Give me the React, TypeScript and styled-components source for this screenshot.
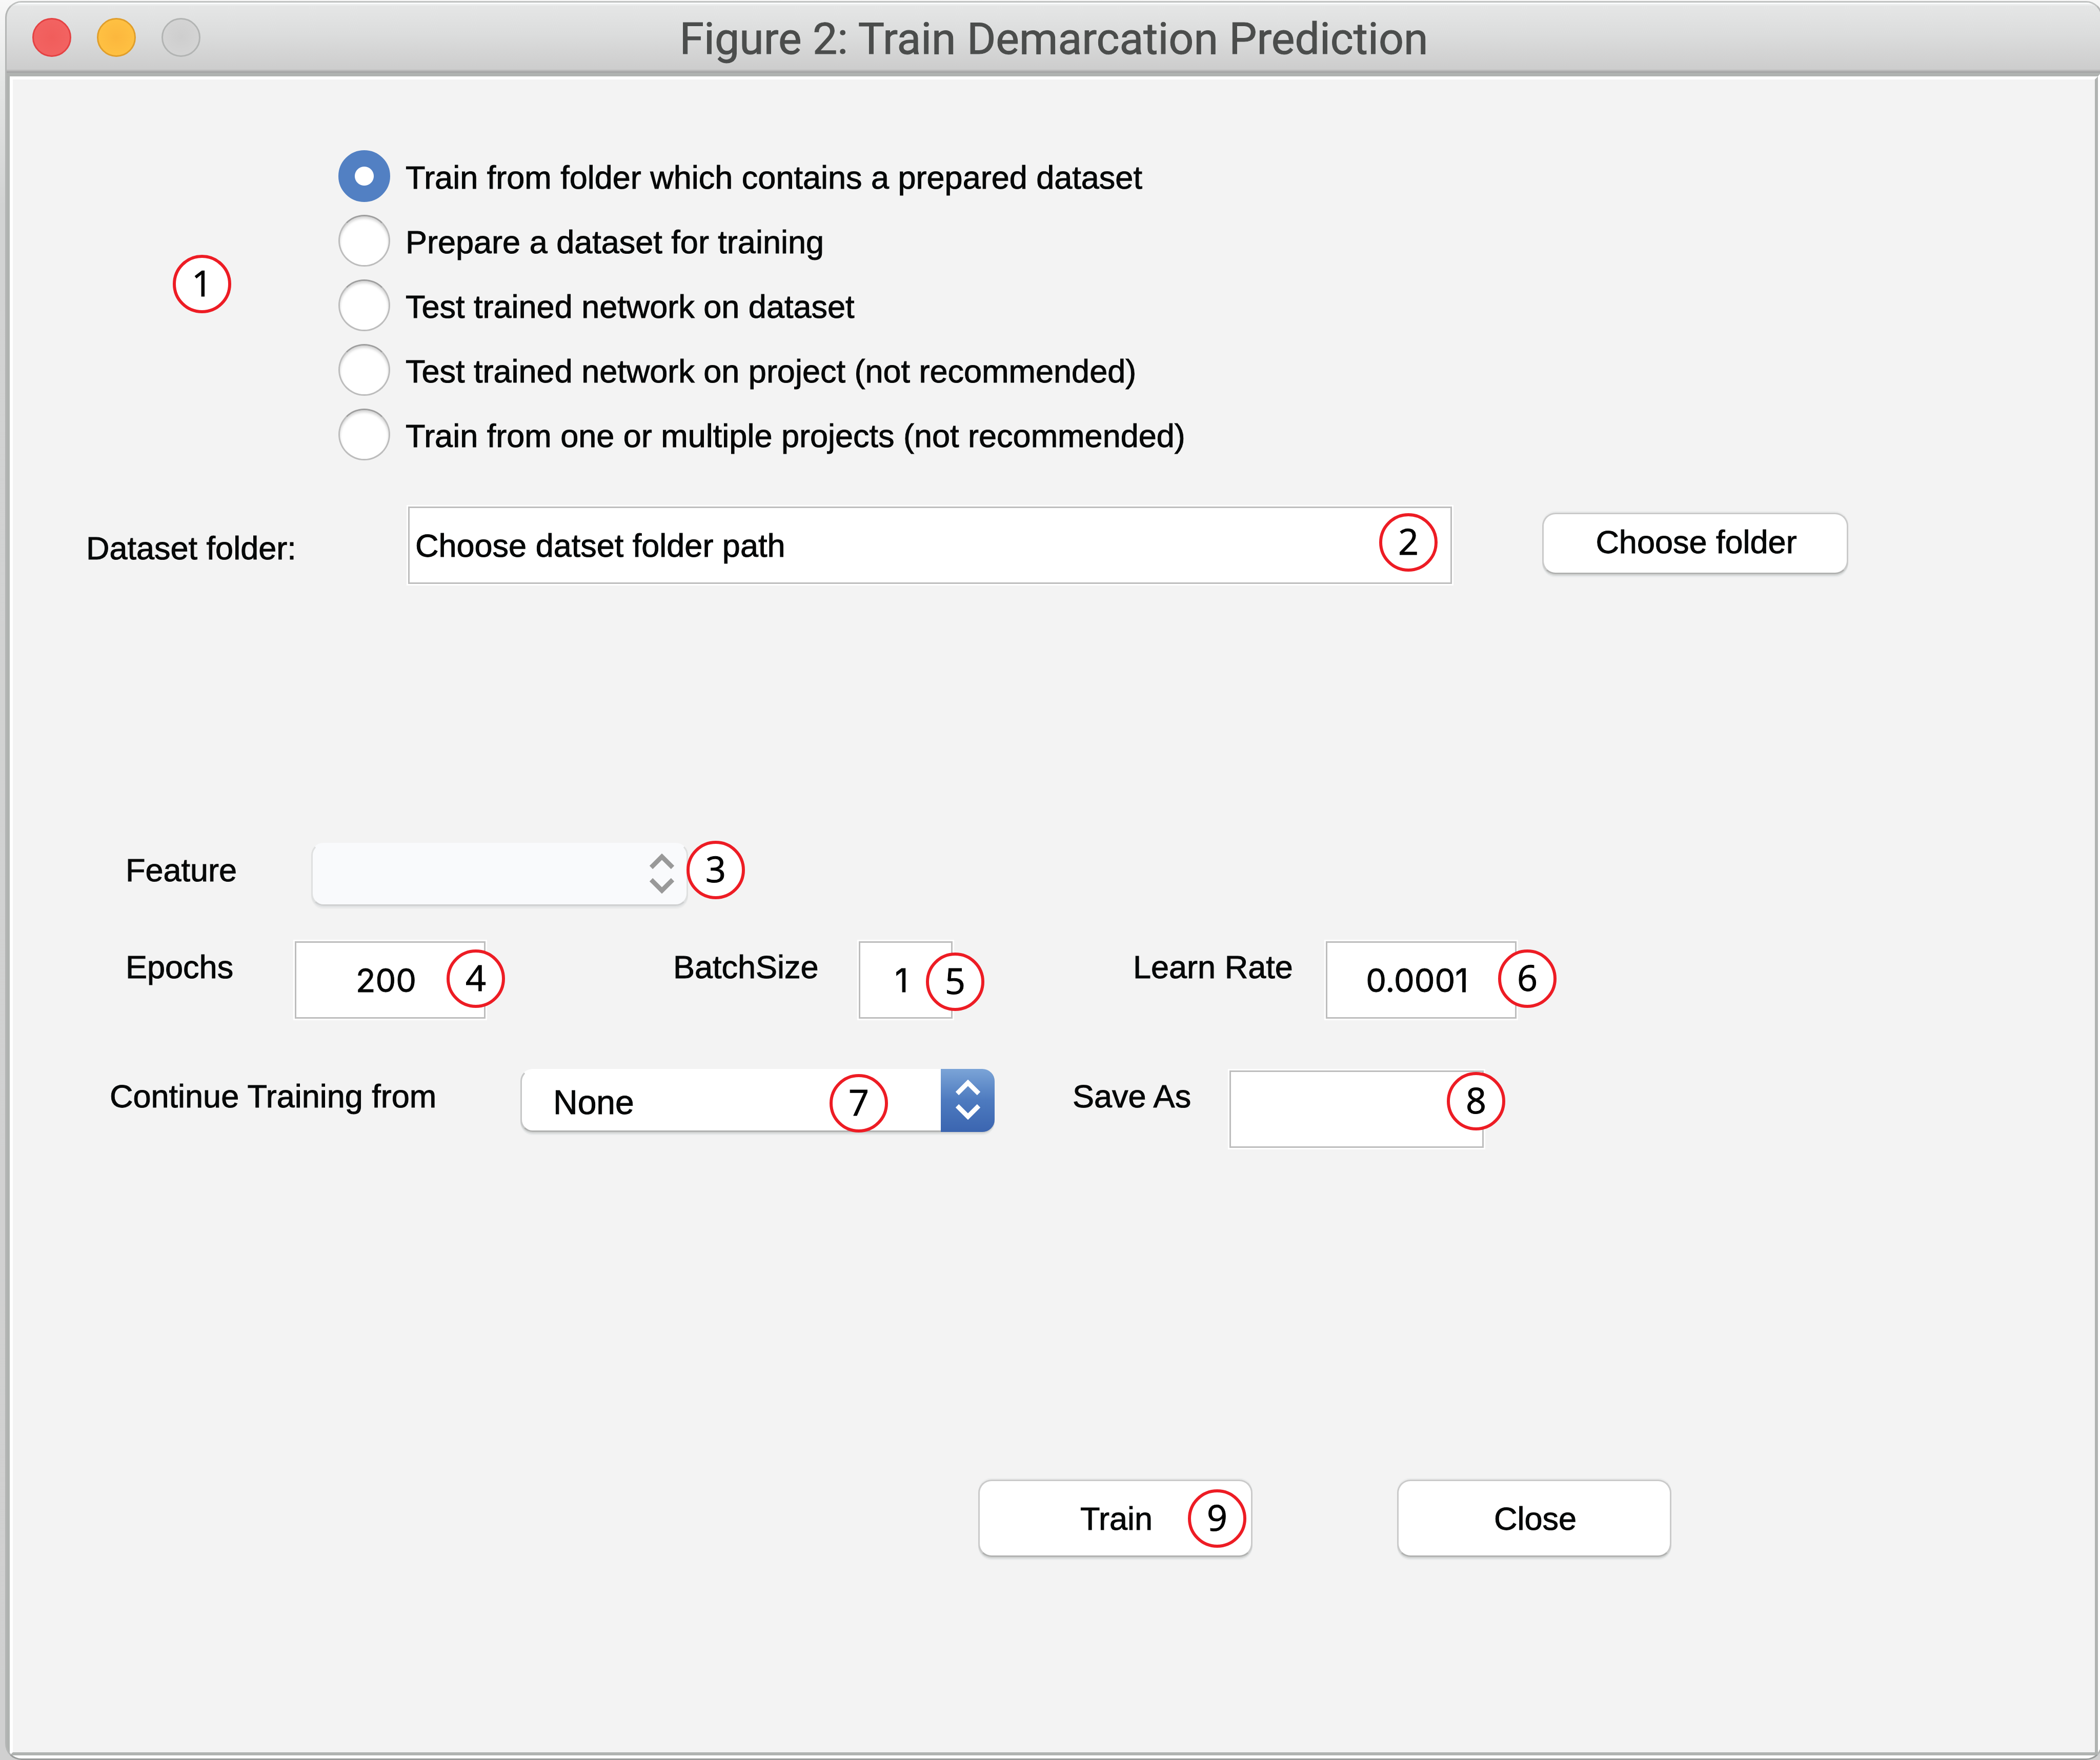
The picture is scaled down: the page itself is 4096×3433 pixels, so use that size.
import React, { useState } from "react";
import styled, { createGlobalStyle } from "styled-components";

const sans = '"Liberation Sans", Arial, Helvetica, sans-serif';

const GlobalStyle = createGlobalStyle`
  *, *::before, *::after { box-sizing: border-box; }
  body { margin: 0; }
`;

const Desktop = styled.div`
  display: flex;
  min-height: 100vh;
  padding: 2px 0 0 10px;
  overflow: hidden;
  background: linear-gradient(#f8f8f8, #e4e6e5 160px, #d2d3d3 400px, #d0d0d0);
  color: #060808;
  font-family: ${sans};
  font-size: 63px;
  line-height: 72px;
  -webkit-text-stroke: 1px currentColor;
`;

const Window = styled.main`
  display: flex;
  flex: 1;
  flex-direction: column;
  margin-right: -5px;
  overflow: hidden;
  border: 3px solid #b4b6b5;
  border-top-color: #bfc1c0;
  border-bottom-color: #999b9a;
  border-radius: 32px;
  background: #b0b3b1;
`;

const TitleBar = styled.header`
  position: relative;
  display: flex;
  align-items: center;
  justify-content: center;
  height: 137px;
  padding-top: 8px;
  border-bottom: 3px solid #a6a6a6;
  background: linear-gradient(#e6e7e7, #dcdddd 45%, #cccccc);
  box-shadow: inset 0 3px #f9fafb, inset 0 6px #ebeded, inset 0 -3px #bbbbbb;
`;

const Lights = styled.div`
  position: absolute;
  top: 30px;
  left: 50px;
  display: flex;
  gap: 50px;
`;

const Light = styled.button<{ $fill: string; $edge: string }>`
  width: 76px;
  height: 76px;
  padding: 0;
  border: 3px solid ${(p) => p.$edge};
  border-radius: 50%;
  background: ${(p) => p.$fill};
`;

const Title = styled.h1`
  margin: 0;
  color: #4b4d4c;
  font-family: Roboto, "Open Sans", sans-serif;
  font-size: 86px;
  font-weight: 400;
  line-height: 100px;
`;

const Etched = styled.div`
  display: flex;
  flex: 1;
  border: 6px solid;
  border-color: #b0b3b1 #ffffff #ffffff #b0b3b1;
  border-top-width: 7px;
`;

const Form = styled.form`
  flex: 1;
  padding-top: 125px;
  border: 6px solid;
  border-color: #ffffff #b0b3b1 #b0b3b1 #ffffff;
  background: #f3f3f3;
`;

const Row = styled.div<{ $above?: number; $left: number }>`
  display: flex;
  align-items: flex-start;
  margin-top: ${(p) => p.$above ?? 0}px;
  padding-left: ${(p) => p.$left}px;
`;

const DatasetRow = styled(Row)`
  padding-right: 481px;
`;

const ButtonRow = styled(Row)`
  justify-content: flex-end;
  gap: 282px;
  padding-right: 826px;
`;

const Marker = styled.span`
  display: flex;
  flex: none;
  align-items: center;
  justify-content: center;
  width: 114px;
  height: 114px;
  padding-bottom: 6px;
  border: 6px solid #ed1c24;
  border-radius: 50%;
  background: #ffffff;
  color: #000000;
  font-family: "Open Sans", "Noto Sans", sans-serif;
  font-size: 70px;
  pointer-events: none;
`;

const ModeMarker = styled(Marker)`
  margin: 217px 209px 0 0;
`;

const PinnedMarker = styled(Marker)<{ $top: number; $right: number }>`
  position: absolute;
  z-index: 1;
  top: ${(p) => p.$top}px;
  right: ${(p) => p.$right}px;
`;

const Options = styled.div`
  display: flex;
  flex-direction: column;
`;

const Option = styled.label`
  display: flex;
  align-items: center;
  gap: 30px;
  height: 126px;
`;

const OptionText = styled.span`
  padding-top: 6px;
`;

const Radio = styled.input`
  appearance: none;
  width: 101px;
  height: 101px;
  margin: 0;
  border: 3px solid #bcbcbc;
  border-top-color: #9e9e9e;
  border-radius: 50%;
  background: #ffffff;
  box-shadow: inset 0 4px 5px #d4d4d4;

  &:checked {
    border-color: #5280c3;
    background: radial-gradient(circle, #ffffff 18px, #5280c3 19px);
    box-shadow: none;
  }
`;

const Label = styled.label<{ $width: number; $low?: boolean }>`
  flex: none;
  width: ${(p) => p.$width}px;
  padding-top: ${(p) => (p.$low ? 48 : 17)}px;
  white-space: nowrap;
`;

const Holder = styled.div<{ $width?: number; $gap?: number }>`
  position: relative;
  display: flex;
  flex: ${(p) => (p.$width ? "none" : "1")};
  width: ${(p) => (p.$width ? `${p.$width}px` : "auto")};
  margin-right: ${(p) => p.$gap ?? 0}px;
`;

const Field = styled.input`
  width: 100%;
  height: 157px;
  padding: 0 14px;
  border: 3px solid #ffffff;
  border-radius: 0;
  outline: 3px solid #bdbdbd;
  outline-offset: -6px;
  background: #ffffff;
  color: inherit;
  font: inherit;
`;

const NumberField = styled(Field)`
  padding: 0 19px 0 3px;
  font-family: Inter, ${sans};
  text-align: center;
`;

const Popup = styled.select`
  appearance: none;
  width: 100%;
  height: 123px;
  padding: 6px 120px 0 61px;
  border: 3px solid #c6c7c7;
  border-top-color: #ffffff;
  border-bottom-color: #b0b1b0;
  border-radius: 24px;
  background: #ffffff;
  box-shadow: 0 3px #d4d6d5, 0 6px #e7e9ea;
  color: #060808;
  font-family: inherit;
  font-size: 66px;
  opacity: 1;

  &:disabled {
    border-color: #f9fafc #dfe0e0 #cfd0d1;
    background: #f9fafc;
    box-shadow: 0 3px #e1e3e4, 0 6px #ececec;
  }
`;

const Arrows = styled.span<{ $active?: boolean }>`
  position: absolute;
  top: 0;
  right: 0;
  display: flex;
  align-items: center;
  justify-content: center;
  width: ${(p) => (p.$active ? 105 : 102)}px;
  height: 123px;
  padding-bottom: 4px;
  border-radius: 0 24px 24px 0;
  background: ${(p) => (p.$active ? "linear-gradient(#7ba4d7, #4d7abf 50%, #3b65b0)" : "none")};
  color: ${(p) => (p.$active ? "#ffffff" : "#999999")};
  pointer-events: none;
`;

const PushButton = styled.button<{ $tall?: boolean }>`
  width: 100%;
  height: ${(p) => (p.$tall ? 151 : 120)}px;
  padding: 0 0 ${(p) => (p.$tall ? 0 : 6)}px 4px;
  border: 3px solid #cacaca;
  border-bottom-color: #b1b2b1;
  border-radius: 26px;
  background: #ffffff;
  box-shadow: 0 -3px #ebecec, 0 3px #d4d6d5, 0 6px #e8eaeb;
  color: inherit;
  font: inherit;
`;

const SideButtonHolder = styled(Holder)`
  margin: 15px 0 0 173px;
`;

const modes = [
  "Train from folder which contains a prepared dataset",
  "Prepare a dataset for training",
  "Test trained network on dataset",
  "Test trained network on project (not recommended)",
  "Train from one or multiple projects (not recommended)",
];

function Chevrons() {
  return (
    <svg width="50" height="78" viewBox="0 0 50 78" fill="none" stroke="currentColor" strokeWidth="9" aria-hidden="true">
      <path d="M4 27 L25 6 L46 27" />
      <path d="M4 51 L25 72 L46 51" />
    </svg>
  );
}

export default function App() {
  const [mode, setMode] = useState(0);

  return (
    <Desktop>
      <GlobalStyle />
      <Window>
        <TitleBar>
          <Lights>
            <Light type="button" aria-label="Close window" $edge="#e44243" $fill="radial-gradient(#f05d5b, #f36564)" />
            <Light type="button" aria-label="Minimize window" $edge="#e09e2b" $fill="radial-gradient(#fcb73d, #ffc444)" />
            <Light type="button" aria-label="Zoom window" disabled $edge="#b2b4b3" $fill="radial-gradient(#cecece, #d6d6d6)" />
          </Lights>
          <Title>Figure 2: Train Demarcation Prediction</Title>
        </TitleBar>
        <Etched>
          <Form onSubmit={(e) => e.preventDefault()}>
            <Row $left={312}>
              <ModeMarker>1</ModeMarker>
              <Options role="radiogroup" aria-label="Mode">
                {modes.map((text, i) => (
                  <Option key={text}>
                    <Radio type="radio" name="mode" checked={mode === i} onChange={() => setMode(i)} />
                    <OptionText>{text}</OptionText>
                  </Option>
                ))}
              </Options>
            </Row>

            <DatasetRow $above={75} $left={143}>
              <Label htmlFor="folder" $width={625} $low>Dataset folder:</Label>
              <Holder>
                <Field id="folder" defaultValue="Choose datset folder path" />
                <PinnedMarker $top={16} $right={31}>2</PinnedMarker>
              </Holder>
              <SideButtonHolder $width={597}>
                <PushButton type="button">Choose folder</PushButton>
              </SideButtonHolder>
            </DatasetRow>

            <Row $above={502} $left={220}>
              <Label htmlFor="feature" $width={362}>Feature</Label>
              <Holder $width={735}>
                <Popup id="feature" disabled />
                <Arrows><Chevrons /></Arrows>
                <PinnedMarker $top={-4} $right={-111}>3</PinnedMarker>
              </Holder>
            </Row>

            <Row $above={66} $left={220}>
              <Label htmlFor="epochs" $width={327}>Epochs</Label>
              <Holder $width={378} $gap={363}>
                <NumberField id="epochs" defaultValue="200" />
                <PinnedMarker $top={19} $right={-35}>4</PinnedMarker>
              </Holder>
              <Label htmlFor="batch" $width={359}>BatchSize</Label>
              <Holder $width={189} $gap={349}>
                <NumberField id="batch" defaultValue="1" />
                <PinnedMarker $top={25} $right={-59}>5</PinnedMarker>
              </Holder>
              <Label htmlFor="rate" $width={373}>Learn Rate</Label>
              <Holder $width={378}>
                <NumberField id="rate" defaultValue="0.0001" />
                <PinnedMarker $top={19} $right={-75}>6</PinnedMarker>
              </Holder>
            </Row>

            <Row $above={95} $left={189}>
              <Label htmlFor="source" $width={801}>Continue Training from</Label>
              <Holder $width={925} $gap={152}>
                <Popup id="source">
                  <option>None</option>
                </Popup>
                <Arrows $active><Chevrons /></Arrows>
                <PinnedMarker $top={10} $right={208}>7</PinnedMarker>
              </Holder>
              <Label htmlFor="save" $width={303}>Save As</Label>
              <Holder $width={502}>
                <Field id="save" />
                <PinnedMarker $top={6} $right={-39}>8</PinnedMarker>
              </Holder>
            </Row>

            <ButtonRow $above={644} $left={0}>
              <Holder $width={535}>
                <PushButton type="submit" $tall>Train</PushButton>
                <PinnedMarker $top={19} $right={12}>9</PinnedMarker>
              </Holder>
              <Holder $width={535}>
                <PushButton type="button" $tall>Close</PushButton>
              </Holder>
            </ButtonRow>
          </Form>
        </Etched>
      </Window>
    </Desktop>
  );
}
